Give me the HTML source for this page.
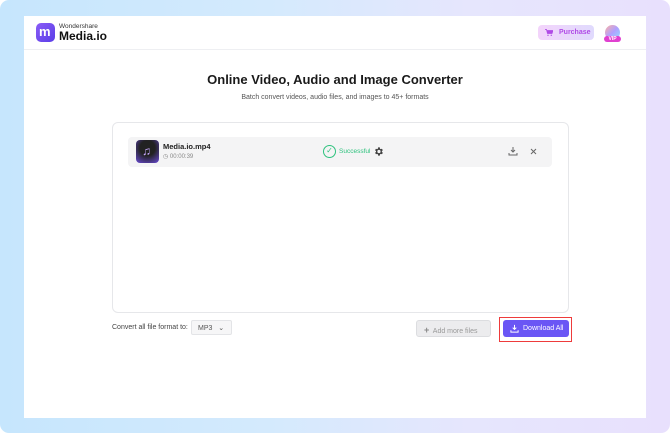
<!DOCTYPE html>
<html><head><style>
*{margin:0;padding:0;box-sizing:border-box}
body{width:670px;height:433px;overflow:hidden;background:#fff;font-family:"Liberation Sans",sans-serif;position:relative}
.bg{position:absolute;inset:0;border-radius:9px;background:linear-gradient(90deg,#c6e6fd 0%,#d4eafd 40%,#e6e6fd 70%,#e8e0fd 100%)}
.card{position:absolute;left:24px;top:16px;width:622px;height:402px;background:#fff}
.hdr{position:absolute;left:0;top:0;width:622px;height:34px;border-bottom:1px solid #eeeff2}
.abs{position:absolute}
</style></head><body>
<div class="bg"></div>
<div class="card">
 <div class="hdr">
  <div class="abs" style="left:12px;top:7px;width:19px;height:19px;border-radius:5px;background:linear-gradient(135deg,#8a5cf6,#5a3ee8)"><span style="position:absolute;left:3px;top:1px;color:#fff;font-weight:bold;font-size:13px">m</span></div>
  <div class="abs" style="left:35px;top:7px;font-size:6.5px;color:#333">Wondershare</div>
  <div class="abs" style="left:35px;top:13px;font-size:12px;font-weight:bold;color:#111">Media.io</div>
  <div class="abs" style="left:514px;top:9px;width:56px;height:15px;border-radius:4px;background:linear-gradient(90deg,#f3d4fb,#e0dafd)">
   <svg class="abs" style="left:7px;top:4px" width="8" height="7" viewBox="0 0 8 7"><path d="M0 .5h1.5l1 4h4.5l1-3H2" fill="#b04ae6" stroke="#b04ae6" stroke-width=".8"/><circle cx="3" cy="6.3" r=".7" fill="#b04ae6"/><circle cx="6.3" cy="6.3" r=".7" fill="#b04ae6"/></svg>
   <span style="position:absolute;left:21px;top:4px;font-size:7px;color:#b04ae6;font-weight:bold">Purchase</span></div>
  <div class="abs" style="left:581px;top:9px;width:15px;height:15px;border-radius:50%;background:linear-gradient(135deg,#ffb0a0,#b0a0ff,#90e0ff)"></div>
  <div class="abs" style="left:580px;top:20px;width:17px;height:6px;border-radius:3px;background:#e040d0;color:#fff;font-size:5px;text-align:center;font-weight:bold;line-height:6px">VIP</div>
 </div>
 <div class="abs" style="left:0;width:622px;top:56px;text-align:center;font-size:13px;font-weight:bold;color:#1a1a1a">Online Video, Audio and Image Converter</div>
 <div class="abs" style="left:0;width:622px;top:78px;text-align:center;font-size:7px;color:#555">Batch convert videos, audio files, and images to 45+ formats</div>
 <div class="abs" style="left:88px;top:106px;width:457px;height:191px;border:1px solid #e6e7ea;border-radius:6px">
  <div class="abs" style="left:15px;top:14px;width:424px;height:30px;background:#f4f4f5;border-radius:4px">
   <div class="abs" style="left:8px;top:3px;width:23px;height:23px;border-radius:4px;background:radial-gradient(circle at 50% 35%,#222 40%,#6a4ad8 100%)"><span style="position:absolute;left:6px;top:4px;color:#c8a8ff;font-size:12px">♫</span></div>
   <div class="abs" style="left:35px;top:5px;font-size:7.5px;font-weight:bold;color:#222">Media.io.mp4</div>
   <div class="abs" style="left:35px;top:16px;font-size:6px;color:#888">◷ 00:00:39</div>
   <div class="abs" style="left:195px;top:8px;width:13px;height:13px;border:1.5px solid #2ec27e;border-radius:50%;color:#2ec27e;font-size:8px;line-height:10px;text-align:center">✓</div>
   <div class="abs" style="left:211px;top:11px;font-size:6.5px;color:#2ec27e">Successful</div>
   <svg class="abs" style="left:245px;top:9px" width="11" height="11" viewBox="0 0 24 24"><path fill="#444" d="M19.4 13a7.5 7.5 0 000-2l2.1-1.6-2-3.5-2.5 1a7 7 0 00-1.7-1L15 3h-4l-.4 2.9a7 7 0 00-1.7 1l-2.5-1-2 3.5L6.6 11a7.5 7.5 0 000 2l-2.1 1.6 2 3.5 2.5-1a7 7 0 001.7 1L11 21h4l.4-2.9a7 7 0 001.7-1l2.5 1 2-3.5zM13 15.5a3.5 3.5 0 110-7 3.5 3.5 0 010 7z"/></svg>
   <svg class="abs" style="left:380px;top:9px" width="10" height="10" viewBox="0 0 10 10"><path d="M5 1v5M3 4l2 2 2-2M1 7v2h8V7" fill="none" stroke="#666" stroke-width="1"/></svg>
   <svg class="abs" style="left:402px;top:11px" width="7" height="7" viewBox="0 0 7 7"><path d="M1 1l5 5M6 1L1 6" stroke="#666" stroke-width="1"/></svg>
  </div>
 </div>
 <div class="abs" style="left:88px;top:308px;font-size:7px;color:#444">Convert all file format to:</div>
 <div class="abs" style="left:167px;top:304px;width:41px;height:15px;border:1px solid #e3e4e7;border-radius:2px;background:#f6f6f7;font-size:7px;color:#555;padding:3px 0 0 6px">MP3 &nbsp;&nbsp;⌄</div>
 <div class="abs" style="left:392px;top:304px;width:75px;height:17px;border:1px solid #dcdde0;border-radius:3px;background:#ececee;font-size:7px;color:#999;padding:4px 0 0 7px"><b style="font-size:9px;color:#888">+</b>&nbsp; Add more files</div>
 <div class="abs" style="left:475px;top:301px;width:73px;height:25px;border:1px solid #ee3b3b"></div>
 <div class="abs" style="left:479px;top:304px;width:66px;height:17px;border-radius:3px;background:#6a56f5;font-size:7px;color:#fff;padding:5px 0 0 20px">Download All</div>
 <svg class="abs" style="left:486px;top:308px" width="9" height="9" viewBox="0 0 10 10"><path d="M5 1v5M3 4l2 2 2-2M1 7v2h8V7" fill="none" stroke="#fff" stroke-width="1.1"/></svg>
</div>
</body></html>
